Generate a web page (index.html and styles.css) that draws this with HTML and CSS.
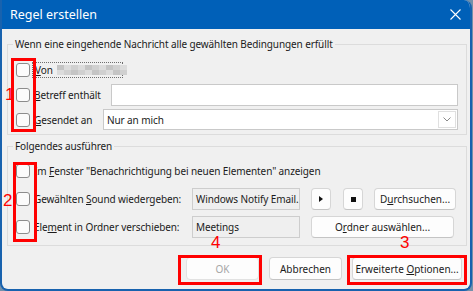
FILE: index.html
```html
<!DOCTYPE html>
<html lang="de">
<head>
  <meta charset="UTF-8">
  <meta name="viewport" content="width=device-width, initial-scale=1.0">
  <title>Regel erstellen</title>
  <link rel="stylesheet" href="styles.css">
</head>
<body>
  <div class="fenster">
    <div class="titelleiste">
      <span class="titel">Regel erstellen</span>
      <svg class="schliessen" width="11" height="11" viewBox="0 0 11 11">
        <path d="M0.5 0.5 L10.5 10.5 M10.5 0.5 L0.5 10.5" stroke="#fff" stroke-width="1.1" fill="none"/>
      </svg>
    </div>

    <fieldset class="gruppe gruppe-bedingung">
      <legend>Wenn eine eingehende Nachricht alle gewählten Bedingungen erfüllt</legend>
      <div class="zeilen">
        <div class="zeile">
          <span class="kasten"></span>
          <span class="fokus"><span><u>V</u>on</span>
            <span class="mosaik">
              <i class="m2"></i><i class="m1"></i><i class="m3"></i><i class="m1"></i><i class="m2"></i><i class="m3"></i><i class="m1"></i><i class="m2"></i><i class="m3"></i><i class="m1"></i>
              <i class="m1"></i><i class="m3"></i><i class="m2"></i><i class="m3"></i><i class="m1"></i><i class="m2"></i><i class="m3"></i><i class="m1"></i><i class="m2"></i><i class="m3"></i>
            </span>
          </span>
        </div>
        <div class="zeile">
          <span class="kasten"></span>
          <span class="beschriftung breite-betreff"><u>B</u>etreff enthält</span>
          <div class="eingabe"></div>
        </div>
        <div class="zeile">
          <span class="kasten"></span>
          <span class="beschriftung breite-gesendet"><u>G</u>esendet an</span>
          <div class="auswahl">
            <span>Nur an mich</span>
            <span class="pfeil">
              <svg width="8" height="5" viewBox="0 0 8 5"><path d="M0.5 0.5 L4 4 L7.5 0.5" stroke="#8a8a8a" fill="none"/></svg>
            </span>
          </div>
        </div>
      </div>
    </fieldset>

    <fieldset class="gruppe gruppe-aktion">
      <legend>Folgendes ausführen</legend>
      <div class="zeilen">
        <div class="zeile hoch">
          <span class="kasten"></span>
          <span class="beschriftung">Im <u>F</u>enster "Benachrichtigung bei neuen Elementen" anzeigen</span>
        </div>
        <div class="zeile hoch">
          <span class="kasten"></span>
          <span class="beschriftung breite-aktion">Gewählten <u>S</u>ound wiedergeben:</span>
          <div class="feld">Windows Notify Email.</div>
          <button class="knopf klein"><span class="dreieck"></span></button>
          <button class="knopf klein abstand"><span class="quadrat"></span></button>
          <button class="knopf durchsuchen"><span>D<u>u</u>rchsuchen...</span></button>
        </div>
        <div class="zeile hoch">
          <span class="kasten"></span>
          <span class="beschriftung breite-aktion">Ele<u>m</u>ent in Ordner verschieben:</span>
          <div class="feld">Meetings</div>
          <button class="knopf ordner"><span>O<u>r</u>dner auswählen...</span></button>
        </div>
      </div>
    </fieldset>

    <div class="fuss">
      <button class="knopf unten inaktiv">OK</button>
      <button class="knopf unten">Abbrechen</button>
      <button class="knopf unten erweitert"><span>Erweiterte <u>O</u>ptionen...</span></button>
    </div>

    <div class="rahmen r-eins"></div>
    <div class="rahmen r-zwei"></div>
    <div class="rahmen r-ok"></div>
    <div class="rahmen r-erweitert"></div>
    <span class="ziffer z-eins">1</span>
    <span class="ziffer z-zwei">2</span>
    <span class="ziffer z-drei">3</span>
    <span class="ziffer z-vier">4</span>
  </div>
</body>
</html>
```

FILE: styles.css
```css
* {
  box-sizing: border-box;
}
body {
  margin: 0;
  background: #7391ab;
  font-family: "Noto Sans", "Open Sans", sans-serif;
  font-size: 10px;
  letter-spacing: -0.1px;
  color: #1b1b1b;
}
.fenster {
  position: relative;
  display: flex;
  flex-direction: column;
  width: 472px;
  height: 291px;
  background: #f0f0f0;
  border: 2px solid #1862ae;
  border-top: 0;
  border-radius: 0 8px 8px 8px;
  overflow: hidden;
}
.titelleiste {
  display: flex;
  align-items: center;
  justify-content: space-between;
  height: 29px;
  margin: 0 -2px;
  padding: 0 11px 0 10px;
  background: #0060b8;
  color: #fff;
  font-size: 12.5px;
  letter-spacing: 0;
}
.gruppe {
  margin: 7px 3px 0 5px;
  padding: 0;
  min-width: 0;
  border: 1px solid #dcdcdc;
}
.gruppe legend {
  margin-left: 5px;
  padding: 0 2px;
  line-height: 16px;
}
.gruppe-bedingung .zeilen {
  padding: 5px 0 2px;
}
.gruppe-aktion {
  margin-top: 3px;
}
.gruppe-aktion .zeilen {
  padding: 3px 0 4px;
}
.zeile {
  display: flex;
  align-items: center;
  height: 25px;
  padding: 0 8px 0 8px;
  white-space: nowrap;
}
.zeile.hoch {
  height: 28px;
}
.kasten {
  flex: none;
  width: 14px;
  height: 14px;
  margin-right: 4px;
  border: 1px solid #8c8c8c;
  border-radius: 3px;
  background: #fbfbfb;
}
.fokus {
  display: flex;
  align-items: center;
  width: 91px;
  height: 16px;
  margin-left: -2px;
  padding-left: 2px;
  border: 1px dotted #6e6e6e;
}
.mosaik {
  display: grid;
  grid-template-columns: repeat(10, 7px);
  grid-template-rows: 5px 5px;
  margin-left: 4px;
}
.mosaik i.m1 { background: #dcdcdc; }
.mosaik i.m2 { background: #c4c4c4; }
.mosaik i.m3 { background: #d0d0d0; }
.beschriftung {
  flex: none;
}
.breite-betreff {
  width: 77px;
}
.breite-gesendet {
  width: 69px;
}
.breite-aktion {
  width: 158px;
}
.eingabe {
  flex: 1;
  height: 22px;
  background: #fff;
  border: 1px solid #c9c9c9;
}
.auswahl {
  flex: 1;
  display: flex;
  align-items: center;
  height: 21px;
  padding: 0 1px 0 3px;
  background: #fff;
  border: 1px solid #c9c9c9;
}
.pfeil {
  display: flex;
  align-items: center;
  justify-content: center;
  width: 18px;
  height: 17px;
  margin-left: auto;
  border: 1px solid #e0e0e0;
}
.feld {
  flex: none;
  width: 108px;
  height: 22px;
  padding: 2px 3px 0;
  overflow: hidden;
  line-height: 16px;
  background: #efefef;
  border: 1px solid #cdcdcd;
}
.knopf {
  display: flex;
  align-items: center;
  justify-content: center;
  height: 22px;
  margin: 0 0 0 11px;
  padding: 0;
  font: inherit;
  white-space: nowrap;
  color: #1b1b1b;
  background: #fdfdfd;
  border: 1px solid #d6d6d6;
  border-bottom-color: #c4c4c4;
  border-radius: 4px;
}
.knopf.klein {
  width: 20px;
}
.knopf.abstand {
  margin-left: 12px;
}
.knopf.durchsuchen {
  width: 82px;
}
.knopf.ordner {
  width: 143px;
}
.dreieck {
  width: 0;
  height: 0;
  border-top: 3px solid transparent;
  border-bottom: 3px solid transparent;
  border-left: 4px solid #111;
}
.quadrat {
  width: 5px;
  height: 5px;
  background: #111;
}
.fuss {
  display: flex;
  justify-content: flex-end;
  gap: 10px;
  padding: 11px 8px 0 0;
}
.knopf.unten {
  width: 73px;
  height: 23px;
  margin: 0;
}
.knopf.erweitert {
  width: 110px;
}
.knopf.inaktiv {
  color: #a6a6a6;
  border-color: #e2e2e2;
}
.rahmen {
  position: absolute;
  border: 3px solid #ff0000;
}
.r-eins { left: 9px; top: 58px; width: 25px; height: 74px; }
.r-zwei { left: 11px; top: 162px; width: 24px; height: 80px; }
.r-ok { left: 176px; top: 255px; width: 84px; height: 30px; }
.r-erweitert { left: 345px; top: 255px; width: 120px; height: 30px; }
.ziffer {
  position: absolute;
  color: #ff0000;
  font-family: "Liberation Sans", Arial, sans-serif;
  font-size: 17px;
  line-height: 13px;
}
.z-eins { left: 3px; top: 88px; }
.z-zwei { left: 1px; top: 194px; }
.z-drei { left: 398px; top: 236px; }
.z-vier { left: 209px; top: 236px; }
```
